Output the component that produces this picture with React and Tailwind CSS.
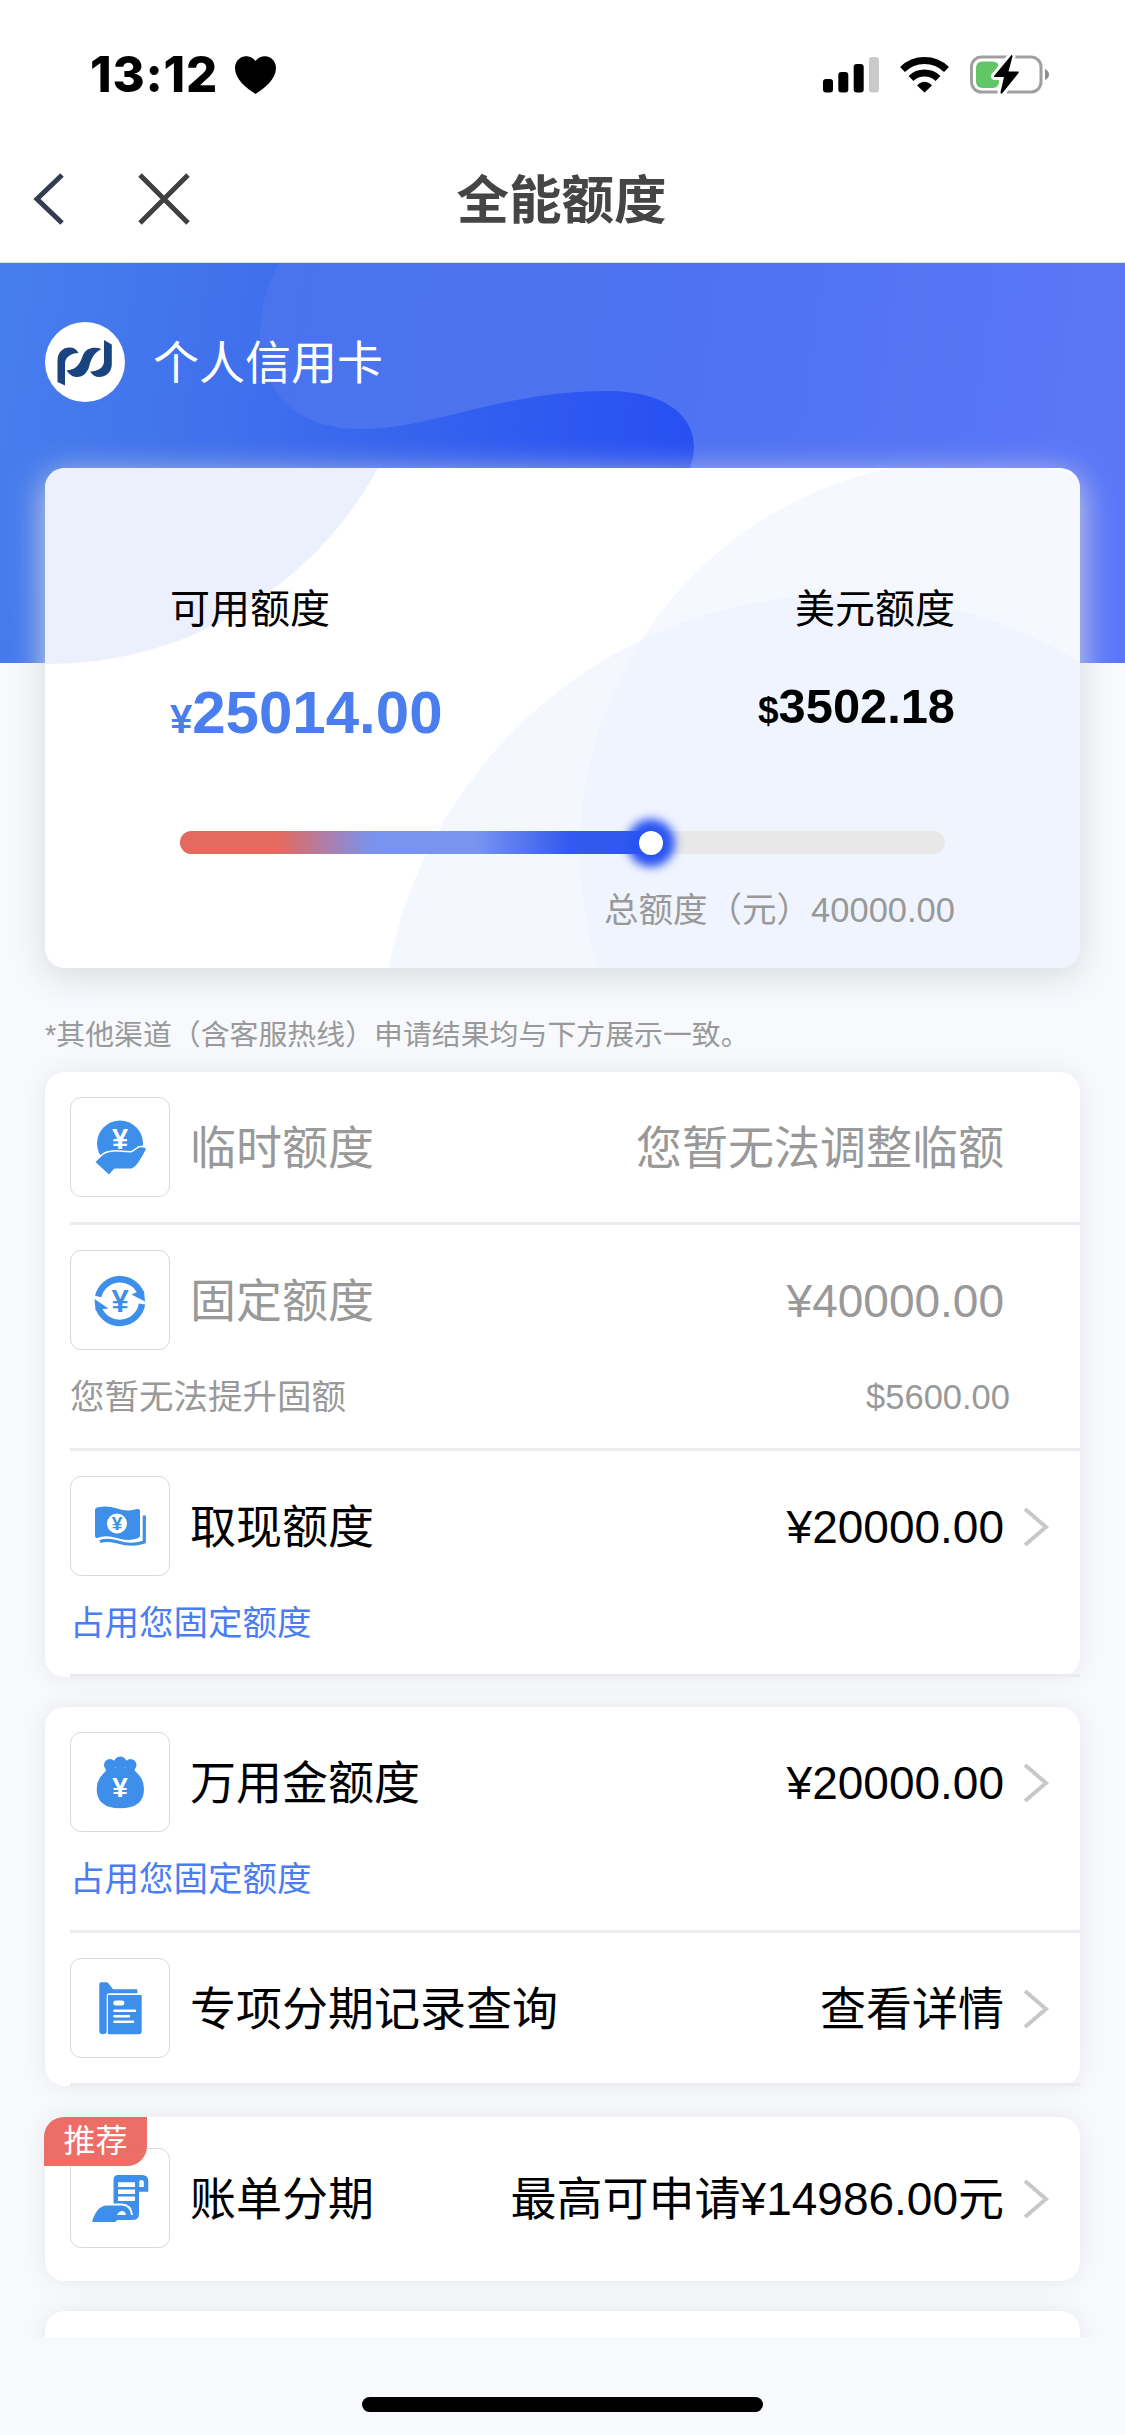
import React from 'react';

const BLUE = '#3d8fe9';

// ¥ sign used inside the row icons
function Yen({ x = 50, y, size, fill = '#fff' }) {
  return (
    <text x={x} y={y} fontSize={size} fill={fill} textAnchor="middle" fontWeight="700" fontFamily="Liberation Sans, sans-serif">¥</text>
  );
}

function HandCoinIcon() {
  return (
    <>
      <circle cx="50" cy="46.5" r="23" fill={BLUE} />
      <Yen y={51.5} size={29} />
      <path
        d="M25.5 65 L33.5 57.5 Q37 55 45 54.5 L60 55.5 Q62 55.5 64 54 L69 50.5 Q72 49.5 76 51.5 Q75 54.5 71 61 Q66 70 61.5 71.5 H45.5 Q43.5 71.5 42.5 73.5 L39 77.5 Z"
        fill={BLUE} stroke="#fff" strokeWidth="3" paintOrder="stroke"
      />
    </>
  );
}

function CycleIcon() {
  return (
    <>
      <path d="M28.2 46.5 A22.5 22.5 0 0 1 71 43.5" fill="none" stroke={BLUE} strokeWidth="6.5" />
      <path d="M61.5 44.5 L67 42 L74 41 L75 51.5 Z" fill={BLUE} />
      <path d="M72 54 A22.5 22.5 0 0 1 28.6 58" fill="none" stroke={BLUE} strokeWidth="6.5" />
      <path d="M24.5 49 L38.5 58.5 L33 59 L25.5 60 Z" fill={BLUE} />
      <Yen y={61.5} size={31} fill={BLUE} />
    </>
  );
}

function CashIcon() {
  return (
    <>
      <path d="M25 34 Q25 32 27 31.5 Q37 29 47 32.5 Q58 36 67 33 Q70 32.5 70 35 V59 Q70 61.5 67 62.5 Q58 65.5 47 62 Q36 58.5 27 62 Q25 62.5 25 60 Z" fill={BLUE} />
      <circle cx="47" cy="47.5" r="10" fill="#fff" />
      <Yen x={47} y={54} size={19} fill={BLUE} />
      <path d="M74.3 39.5 V66 Q62 70.5 48 66 Q38 63 30 65.5" fill="none" stroke={BLUE} strokeWidth="3.2" strokeLinejoin="round" />
    </>
  );
}

function BagIcon() {
  return (
    <>
      <circle cx="40" cy="33" r="6" fill={BLUE} />
      <circle cx="50.3" cy="31" r="6.5" fill={BLUE} />
      <circle cx="60.5" cy="33" r="6" fill={BLUE} />
      <path d="M37 36 H63.5 Q64.5 39 68 42 Q74 48 74 57 Q74 76.3 50.3 76.3 Q26.7 76.3 26.7 57 Q26.7 48 33 42 Q36.5 39 37 36 Z" fill={BLUE} />
      <Yen y={65} size={28} />
    </>
  );
}

function FolderIcon() {
  return (
    <>
      <path d="M29.3 26 Q29.3 24.3 31 24.3 H36.5 Q38 24.3 39 26 L43 31.3 H67.3 V35.3 H39.5 Q36.7 35.3 36.7 38 V73 Q36.7 76.3 33 76.3 Q29.3 76.3 29.3 73 Z" fill={BLUE} />
      <path d="M37.9 37 H71.7 V73.5 Q71.7 76.3 69 76.3 H37.9 Z" fill={BLUE} />
      <rect x="43.3" y="42.5" width="11" height="5" rx="2.3" fill="#fff" />
      <path d="M44.5 52.7 H65 M44.5 58.3 H59 M44.5 63.8 H63" stroke="#fff" strokeWidth="2.6" strokeLinecap="round" />
    </>
  );
}

function BillIcon() {
  return (
    <>
      <path d="M48 27 H72 Q78.3 27 78.3 33 V43.7 H69 V66 Q69 72 62 72 H43.5 V32 Q43.5 27 48 27 Z" fill={BLUE} />
      <path d="M69.2 39 V34 Q69.2 32 71.5 32 Q73.8 32 73.8 34 V39 Z" fill="#fff" />
      <path d="M48 36.6 H65 M48 43.7 H65 M48 50.8 H65" stroke="#fff" strokeWidth="4.6" />
      <path d="M22.3 74 Q22.3 70 27 63 Q31 57.5 37 57.5 H52 Q59 58 61 67 V71.5 H48 L45 74 Z" fill={BLUE} />
      <path d="M43 56.5 H52 Q61 57 62 67" fill="none" stroke="#fff" strokeWidth="2" />
      <path d="M47 67 Q49 63 52.5 63 Q55.5 63.5 56 67 Z" fill="#fff" />
    </>
  );
}

function Chevron() {
  return (
    <svg className="h-[42px] w-[28px]" viewBox="0 0 28 42" fill="none" stroke="#c8c8cd" strokeWidth="4">
      <path d="M2 3 L23 21 L2 39" />
    </svg>
  );
}

function Row({ icon, title, value, muted, arrow, children, last }) {
  return (
    <div className={last ? 'ml-[25px] pt-[31px] pb-[33px]' : 'ml-[25px] border-b-[3px] border-[#ececee] pt-[25px] pb-[25px]'}>
      <div className={`flex h-[100px] items-center text-[46px] ${muted ? 'text-[#999]' : 'text-black'}`}>
        <div className="size-[100px] shrink-0 rounded-[11px] border border-[#dadada] bg-white">
          <svg className="size-full" viewBox="1 1 98 98">{icon}</svg>
        </div>
        <span className="ml-5 whitespace-nowrap pt-0.5 leading-[60px]">{title}</span>
        <span className="ml-auto whitespace-nowrap pt-0.5 leading-[60px]">{value}</span>
        <div className="ml-[19px] mr-[29px] w-[28px] pt-0.5">{arrow && <Chevron />}</div>
      </div>
      {children}
    </div>
  );
}

function Group({ children }) {
  return (
    <div className="mx-[45px] mb-[30px] rounded-[20px] bg-white shadow-[0_0_24px_rgba(0,0,0,0.07)]">{children}</div>
  );
}

function FixedHint() {
  return <p className="flex h-[73px] items-center pt-[21px] text-[34.5px] leading-[44px] text-[#4a7cf5]">占用您固定额度</p>;
}

function StatusBar() {
  return (
    <div className="flex h-[150px] items-center justify-between pl-[90px] pr-[76px]">
      <div className="flex items-center">
        <span className="w-[145px] whitespace-nowrap font-['Inter',sans-serif] text-[49px] font-extrabold leading-[60px] tracking-[0.8px]">13:12</span>
        <svg className="h-[38px] w-[41px]" viewBox="0 0 41 38">
          <path d="M20.5 5 C24 0.5 29 0 32 0.5 C37.5 1.5 41 6.5 41 12 C41 23 30 32 20.5 38 C11 32 0 23 0 12 C0 6.5 3.5 1.5 9 0.5 C12 0 17 0.5 20.5 5 Z" />
        </svg>
      </div>
      <svg className="h-[42px] w-[226px]" viewBox="823 54 226 42">
        <rect x="823" y="79" width="10" height="13.5" rx="3" />
        <rect x="838.3" y="72" width="10" height="20.5" rx="3" />
        <rect x="853.7" y="64" width="10" height="28.5" rx="3" />
        <rect x="869" y="57" width="10" height="35.5" rx="3" fill="#cacaca" />
        <path d="M902.5 69.5 A31.5 31.5 0 0 1 946.5 69.5" fill="none" stroke="#000" strokeWidth="7" />
        <path d="M911 78.5 A19.5 19.5 0 0 1 938 78.5" fill="none" stroke="#000" strokeWidth="7" />
        <path d="M917 85.5 Q924.5 78 932 85.5 L924.5 92.5 Z" />
        <rect x="971.5" y="57" width="69.5" height="35" rx="10" fill="none" stroke="#a0a0a0" strokeWidth="3" />
        <path d="M1045 69 Q1049 71 1049 74.5 Q1049 78 1045 80 Z" fill="#8e8e8e" />
        <rect x="976" y="61.5" width="23" height="26.5" rx="6" fill="#63c666" />
        <path
          d="M1011.5 55 L994 76 Q993.5 77 994.5 77 H1004 L1000.5 92 Q1000.5 94.5 1002.5 93 L1018.5 73 Q1019.5 71.5 1018 71.5 H1008.5 L1012.5 56.5 Q1012.5 54.5 1011.5 55 Z"
          stroke="#fff" strokeWidth="6" paintOrder="stroke"
        />
      </svg>
    </div>
  );
}

function NavBar() {
  return (
    <div className="grid h-[113px] grid-cols-[1fr_auto_1fr] items-start border-b border-[#dcdfe6] pt-[18px]">
      <div className="flex h-[62px] items-center gap-[73px] pl-[32px]">
        <svg className="h-[52px] w-[33px]" viewBox="0 0 33 52" fill="none" stroke="#333c50" strokeWidth="5">
          <path d="M30 2 L5 26 L30 50" />
        </svg>
        <svg className="size-[52px]" viewBox="0 0 52 52" fill="none" stroke="#404040" strokeWidth="5">
          <path d="M2 2 L50 50 M50 2 L2 50" />
        </svg>
      </div>
      <h1 className="pr-0.5 pt-0.5 text-[52.5px] font-bold leading-[62px] text-[#454545]">全能额度</h1>
    </div>
  );
}

function BannerArt() {
  return (
    <svg className="absolute left-0 top-0 h-[400px] w-[1125px]" viewBox="0 0 1125 400">
      <defs>
        <linearGradient id="deep" gradientUnits="userSpaceOnUse" x1="0" y1="60" x2="690" y2="180">
          <stop offset="0" stopColor="#477eed" />
          <stop offset="0.35" stopColor="#4070ec" />
          <stop offset="1" stopColor="#274ff2" />
        </linearGradient>
        <linearGradient id="wave" gradientUnits="userSpaceOnUse" x1="250" y1="0" x2="1125" y2="120">
          <stop offset="0" stopColor="#4974ee" />
          <stop offset="0.5" stopColor="#4e72f1" />
          <stop offset="1" stopColor="#5b77f8" />
        </linearGradient>
      </defs>
      <rect width="1125" height="400" fill="url(#deep)" />
      <path d="M279 0 C245 60 248 166 362 166 C432 166 500 128 608 128 C678 128 705 165 690 205 L640 400 H1125 V0 Z" fill="url(#wave)" />
    </svg>
  );
}

function CreditCard() {
  return (
    <div className="relative mx-[45px] mt-[66px] h-[500px] rounded-[20px] bg-white shadow-[0_8px_34px_#d9dade]">
      <svg className="absolute inset-0 size-full rounded-[20px]" viewBox="45 468 1035 500">
        <circle cx="48" cy="288" r="376" fill="#ebf0fc" />
        <circle cx="970" cy="850" r="390" fill="#eef3fd" opacity="0.6" />
        <circle cx="840" cy="1055" r="460" fill="#ebf1fd" opacity="0.55" />
      </svg>
      <div className="relative px-[125px] pt-[111px]">
        <div className="flex justify-between">
          <div>
            <p className="text-[40px] leading-[60px]">可用额度</p>
            <p className="mt-[44px] text-[60px] font-bold leading-[60px] text-[#4a7dee]"><span className="text-[40px]">¥</span>25014.00</p>
          </div>
          <div className="text-right">
            <p className="text-[40px] leading-[60px]">美元额度</p>
            <p className="mt-[43px] text-[48.8px] font-bold leading-[48px]"><span className="text-[37px]">$</span>3502.18</p>
          </div>
        </div>
        <div className="mx-[10px] mt-[82px] flex h-[23px] items-center rounded-full bg-[#e8e8e8]">
          <div className="h-full w-[471px] rounded-l-full bg-[linear-gradient(90deg,#e4695f_0%,#e4695f_21%,#7893f0_41%,#7893f0_63%,#3159ef_83%,#3159ef_100%)]" />
          <div className="-ml-3 size-6 rounded-full bg-white shadow-[0_0_10px_12px_#2a54f2]" />
        </div>
        <p className="mt-[34px] text-right text-[34.5px] leading-[44px] text-[#999]">总额度（元）40000.00</p>
      </div>
    </div>
  );
}

export default function App() {
  return (
    <div className="h-[2435px] w-[1125px] overflow-hidden bg-[#f7f9fd] font-['Liberation_Sans','Noto_Sans_CJK_SC',sans-serif] text-black">
      <div className="bg-white">
        <StatusBar />
        <NavBar />
      </div>

      <main className="relative h-[2074px] overflow-hidden">
        <BannerArt />
        <div className="relative pt-[59px]">
          <div className="flex h-20 items-center gap-7 pl-[45px]">
            <svg className="size-20" viewBox="0 0 80 80">
              <circle cx="40" cy="40" r="40" fill="#fff" />
              <g fill="#1a4480">
                <path d="M12.5 60 V39 C12.5 30 18 25.5 24.5 25.5 C29 25.5 32 27.5 33.5 31 C26 31 20 35 20 42 V63.5 Z" />
                <path d="M56.5 27 C49 24 41 26 38 33 C35.5 40 33 47.5 21.5 48.5 C25 53 28 55 32 55 C38 55 42 51 44 45 C46 37 49 30.5 56.5 27 Z" />
                <path d="M59 18 L66.8 22.5 V42 C66.8 50 61 55 54.5 55 C50 55 47 53 45.3 49.5 C53 49 59 46 59 39 Z" />
              </g>
            </svg>
            <span className="pt-px text-[46px] leading-[60px] text-white">个人信用卡</span>
          </div>

          <CreditCard />

          <p className="mb-[15px] mt-[45px] pl-[45px] text-[28.9px] leading-[44px] text-[#999]">*其他渠道（含客服热线）申请结果均与下方展示一致。</p>

          <Group>
            <Row icon={<HandCoinIcon />} title="临时额度" value="您暂无法调整临额" muted />
            <Row icon={<CycleIcon />} title="固定额度" value="¥40000.00" muted>
              <div className="flex h-[73px] items-center justify-between pr-[70px] pt-[20px] text-[34.5px] leading-[44px] text-[#999]">
                <span>您暂无法提升固额</span>
                <span>$5600.00</span>
              </div>
            </Row>
            <Row icon={<CashIcon />} title="取现额度" value="¥20000.00" arrow>
              <FixedHint />
            </Row>
          </Group>

          <Group>
            <Row icon={<BagIcon />} title="万用金额度" value="¥20000.00" arrow>
              <FixedHint />
            </Row>
            <Row icon={<FolderIcon />} title="专项分期记录查询" value="查看详情" arrow />
          </Group>

          <div className="relative mt-[31px]">
            <Group>
              <Row icon={<BillIcon />} title="账单分期" value="最高可申请¥14986.00元" arrow last />
            </Group>
            <span className="absolute left-[44px] top-0 h-[49px] w-[103px] rounded-br-[20px] rounded-tl-[20px] bg-[#ec655f]/95 text-center text-[32px] leading-[49px] text-white">推荐</span>
          </div>

          <Group>
            <div className="h-[120px]" />
          </Group>
        </div>
      </main>

      <div className="mx-auto mt-[60px] h-[15px] w-[401px] rounded-full bg-black" />
    </div>
  );
}
